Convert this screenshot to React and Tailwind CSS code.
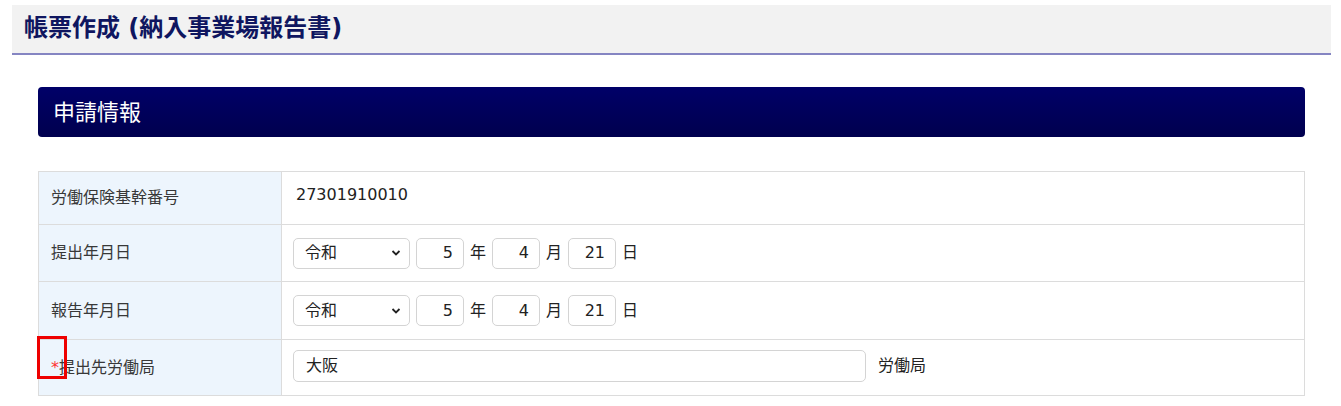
import React from "react";

const font = { fontFamily: '"DejaVu Sans", "Noto Sans CJK JP", sans-serif' };

function EraSelect() {
  return (
    <div className="relative h-[31px] w-[117px] rounded-[5px] border border-[#d4d4d4] bg-white">
      <span className="absolute left-[11px] top-1/2 -translate-y-1/2 text-[16px] text-[#222]">令和</span>
      <svg className="absolute right-[8px] top-1/2 -translate-y-1/2" width="10" height="7" viewBox="0 0 10 7">
        <path d="M1.5 1.5 L5 5 L8.5 1.5" fill="none" stroke="#222" strokeWidth="1.8" />
      </svg>
    </div>
  );
}

function NumBox({ v }) {
  return (
    <div className="flex h-[31px] w-[48px] items-center justify-end rounded-[5px] border border-[#d4d4d4] bg-white pr-[10px] text-[16px] text-[#222]">
      {v}
    </div>
  );
}

function DateRow() {
  return (
    <div className="flex items-center gap-[6px] text-[16px] text-[#222]">
      <EraSelect />
      <NumBox v="5" />
      <span>年</span>
      <NumBox v="4" />
      <span>月</span>
      <NumBox v="21" />
      <span>日</span>
    </div>
  );
}

function Row({ h, label, children, required }) {
  return (
    <div className={`grid grid-cols-[243px_1fr] ${h}`}>
      <div className="relative flex items-center border-b border-r border-[#dcdcdc] bg-[#edf5fd] pl-[12px] text-[16px] text-[#383838]">
        {required && <span className="text-[#ff3333]">*</span>}
        <span>{label}</span>
        {required && (
          <div className="pointer-events-none absolute left-[-2px] top-[-4px] h-[43px] w-[30px] border-[3px] border-[#ee0000]" />
        )}
      </div>
      <div className="flex items-center border-b border-r border-[#dcdcdc] bg-white pl-[11px]">{children}</div>
    </div>
  );
}

export default function App() {
  return (
    <div className="min-h-[406px] bg-white pt-[5px]" style={font}>
      <div className="ml-[12px] mr-[10px]">
        <div className="flex h-[50px] items-center border-b-2 border-[#8585c2] bg-[#f2f2f2] pl-[12px] pb-[2px]">
          <h1 className="text-[24px] font-bold text-[#0f1660]">帳票作成 (納入事業場報告書)</h1>
        </div>
        <div className="px-[26px] pt-[32px]">
          <div className="flex h-[50px] items-center rounded-[4px] bg-gradient-to-b from-[#000068] to-[#00004e] pl-[15px]">
            <h2 className="text-[22px] text-white">申請情報</h2>
          </div>
          <div className="mt-[34px] border-l border-t border-[#dcdcdc]">
            <Row h="h-[53px]" label="労働保険基幹番号">
              <span className="pl-[3px] pb-[6px] text-[16px] text-[#222]">27301910010</span>
            </Row>
            <Row h="h-[57px]" label="提出年月日">
              <DateRow />
            </Row>
            <Row h="h-[58px]" label="報告年月日">
              <DateRow />
            </Row>
            <Row h="h-[56px]" label="提出先労働局" required>
              <div className="flex items-center gap-[12px] pb-[4px]">
                <div className="flex h-[32px] w-[573px] items-center rounded-[5px] border border-[#d4d4d4] bg-white pl-[12px] text-[16px] text-[#222]">
                  大阪
                </div>
                <span className="text-[16px] text-[#222]">労働局</span>
              </div>
            </Row>
          </div>
        </div>
      </div>
    </div>
  );
}
